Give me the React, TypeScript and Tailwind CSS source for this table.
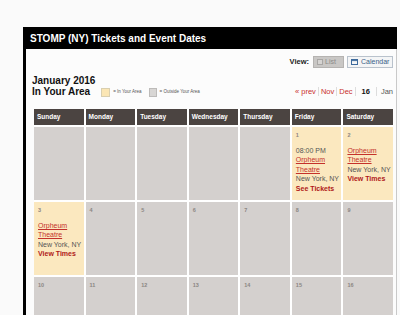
import React from "react";

const DAYS = ["Sunday", "Monday", "Tuesday", "Wednesday", "Thursday", "Friday", "Saturday"];

type Show = { time?: string; venue: string[]; city: string; action: string };
type Cell = { day?: number; show?: Show };

const orpheum = (action: string, time?: string): Show => ({
  time,
  venue: ["Orpheum", "Theatre"],
  city: "New York, NY",
  action,
});

const CELLS: Cell[] = [
  {}, {}, {}, {}, {},
  { day: 1, show: orpheum("See Tickets", "08:00 PM") },
  { day: 2, show: orpheum("View Times") },
  { day: 3, show: orpheum("View Times") },
  { day: 4 }, { day: 5 }, { day: 6 }, { day: 7 }, { day: 8 }, { day: 9 },
  { day: 10 }, { day: 11 }, { day: 12 }, { day: 13 }, { day: 14 }, { day: 15 }, { day: 16 },
];

const DayCell = ({ cell }: { cell: Cell }) => {
  const inArea = !!cell.show;
  return (
    <div className={`h-[73px] pl-[4px] pt-[5px] ${inArea ? "bg-[#fbe8bf]" : "bg-[#d4d0ce]"}`}>
      {cell.day && <div className="text-[5.5px] font-bold leading-[7px] text-[#8b8683]">{cell.day}</div>}
      {cell.show && (
        <div className="mt-[7px] whitespace-nowrap text-[7px] leading-[9.4px] text-[#555]">
          {cell.show.time && <div>{cell.show.time}</div>}
          {cell.show.venue.map((v) => (
            <div key={v} className="text-[#c4312b] underline">{v}</div>
          ))}
          <div>{cell.show.city}</div>
          <div className="font-bold text-[#b01818]">{cell.show.action}</div>
        </div>
      )}
    </div>
  );
};

export default function App() {
  return (
    <div className="h-[315px] w-[400px] overflow-hidden bg-[#fafafa] pl-[23px] pt-[27px] font-['Liberation_Sans',Arial,sans-serif]">
      <div className="w-[374px]">
        {/* title bar */}
        <div className="flex h-[22px] items-center bg-black pl-[7px] text-[10px] font-bold text-white">
          STOMP (NY) Tickets and Event Dates
        </div>

        <div className="border-l-[3px] border-r border-l-black border-r-[#c9c9c9] bg-[#fcfcfc] pb-2 pl-[8px] pr-[3px] pt-[7px]">
          {/* view switch */}
          <div className="flex h-[12px] items-center justify-end gap-[3px]">
            <span className="mr-[1px] text-[7.5px] font-bold text-[#222]">View:</span>
            <div className="flex h-[12px] w-[31px] items-center gap-[2px] border border-[#b5b3b1] bg-[#c9c7c5] pl-[3px] text-[7px] text-[#8d8b89]">
              <span className="h-[6px] w-[6px] border border-[#a9a7a5] bg-[#d6d4d2]" />
              List
            </div>
            <div className="flex h-[12px] w-[46px] items-center gap-[3px] border border-[#b9c2cc] bg-[#f4f5f6] pl-[3px] text-[7px] text-[#3a5f88]">
              <svg width="7" height="6" viewBox="0 0 7 6" className="shrink-0">
                <rect x="0.5" y="0.5" width="6" height="5" fill="none" stroke="#3d6a9c" />
                <line x1="0.5" y1="1.6" x2="6.5" y2="1.6" stroke="#3d6a9c" />
              </svg>
              Calendar
            </div>
          </div>

          {/* month heading, legend and pager */}
          <div className="mt-[7px] flex items-end justify-between">
            <div className="-ml-[2px]">
              <div className="text-[10px] font-bold leading-[11px] text-[#111]">January 2016</div>
              <div className="flex items-center">
                <span className="text-[10px] font-bold leading-[12px] text-[#111]">In Your Area</span>
                <span className="ml-[11px] h-[9px] w-[9px] border border-[#d9cfb0] bg-[#fbe6b4]" />
                <span className="ml-[3px] text-[4.5px] text-[#555]">= In Your Area</span>
                <span className="ml-[7px] h-[9px] w-[8px] border border-[#bdbbb9] bg-[#d8d6d4]" />
                <span className="ml-[3px] text-[4.5px] text-[#555]">= Outside Your Area</span>
              </div>
            </div>
            <div className="mb-[2px] flex items-center text-[7.5px] leading-[9px] text-[#c9302c]">
              <span>« prev</span>
              <span className="mx-[2px] h-[9px] w-px bg-[#ddd]" />
              <span>Nov</span>
              <span className="mx-[2px] h-[9px] w-px bg-[#ddd]" />
              <span>Dec</span>
              <span className="mx-[2px] h-[9px] w-px bg-[#ddd]" />
              <span className="px-[4px] font-bold text-[#111]">16</span>
              <span className="mx-[2px] h-[9px] w-px bg-[#ddd]" />
              <span className="pl-[2px] text-[#555]">Jan</span>
            </div>
          </div>

          {/* calendar grid */}
          <div className="mt-[11px] grid grid-cols-7 gap-[2px] bg-white">
            {DAYS.map((d) => (
              <div key={d} className="flex h-[16px] items-center bg-[#4b4441] pl-[3px] text-[6.5px] font-bold text-white">
                {d}
              </div>
            ))}
            {CELLS.map((c, i) => (
              <DayCell key={i} cell={c} />
            ))}
          </div>
        </div>
      </div>
    </div>
  );
}
